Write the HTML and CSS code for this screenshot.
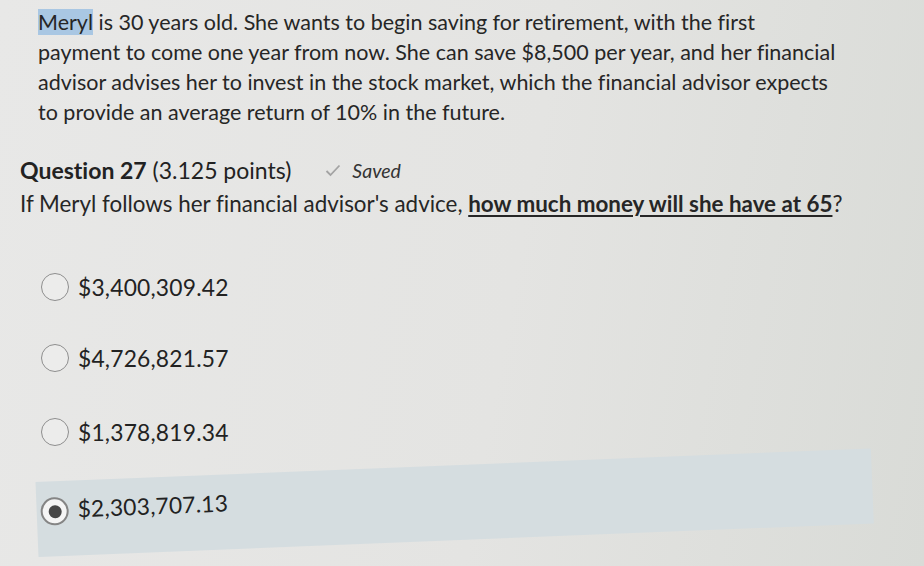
FILE: index.html
```html
<!DOCTYPE html>
<html>
<head>
<meta charset="utf-8">
<link rel="stylesheet" href="styles.css">
</head>
<body>
<div class="page">
  <p class="stem"><span class="sel">Meryl</span> is 30 years old. She wants to begin saving for retirement, with the first<br>payment to come one year from now. She can save $8,500 per year, and her financial<br>advisor advises her to invest in the stock market, which the financial advisor expects<br>to provide an average return of 10% in the future.</p>
  <div class="qhead">
    <span class="qtitle"><b>Question 27</b> (3.125 points)</span>
    <span class="saved">
      <svg class="check" width="16" height="13" viewBox="0 0 16 13"><path d="M1.5 7 L5.5 11 L14.5 1.5" fill="none" stroke="#a3a3a3" stroke-width="1.8"/></svg>
      <i>Saved</i>
    </span>
  </div>
  <p class="prompt">If Meryl follows her financial advisor's advice, <b class="u">how much money will she have at 65</b>?</p>
  <div class="options">
    <div class="opt o1"><span class="radio"></span><span class="val">$3,400,309.42</span></div>
    <div class="opt o2"><span class="radio"></span><span class="val">$4,726,821.57</span></div>
    <div class="opt o3"><span class="radio"></span><span class="val">$1,378,819.34</span></div>
    <div class="opt chosen"><span class="radio on"></span><span class="val">$2,303,707.13</span></div>
  </div>
</div>
</body>
</html>
```
FILE: styles.css
```css
html, body {
  margin: 0;
  padding: 0;
}
body {
  width: 924px;
  height: 566px;
  overflow: hidden;
  background: linear-gradient(100deg, #e8e8e7 0%, #e4e4e2 55%, #d9dbd7 100%);
  font-family: Lato, "Open Sans", sans-serif;
  font-variant-ligatures: none;
  color: #222;
}
.page {
  padding-top: 7px;
}
.stem {
  margin: 0 0 0 38px;
  font-size: 21.5px;
  line-height: 30px;
  color: #262626;
}
.sel {
  background: #a9c7e3;
}
.qhead {
  display: flex;
  align-items: center;
  margin: 29px 0 0 20px;
  height: 28px;
}
.qtitle {
  font-size: 23px;
  color: #222;
}
.qtitle b {
  font-weight: 700;
}
.saved {
  display: flex;
  align-items: center;
  margin-left: 34px;
  color: #333;
  font-size: 19.5px;
  gap: 11px;
}
.prompt {
  margin: 6px 0 0 20px;
  font-size: 22.4px;
  line-height: 27px;
  color: #262626;
}
.u {
  text-decoration: underline;
  text-decoration-thickness: 2px;
  text-underline-offset: 3px;
}
.options {
  margin-top: 58px;
  display: flex;
  flex-direction: column;
}
.opt {
  display: flex;
  align-items: center;
  gap: 9px;
  height: 24px;
  padding-left: 41px;
}
.o2 { margin-top: 47px; }
.o3 { margin-top: 50px; }
.opt.chosen {
  margin: 38px 0 0 37px;
  padding: 16px 0 31px 4px;
  width: 832px;
  height: 28px;
  align-items: center;
  background: #d5dde0;
  transform: rotate(-2.3deg);
  transform-origin: 0 50%;
}
.radio {
  width: 28px;
  height: 28px;
  border: 1.5px solid #8e8e8e;
  border-radius: 50%;
  box-sizing: border-box;
  background: #ececeb;
  display: flex;
  align-items: center;
  justify-content: center;
  flex: none;
}
.radio.on {
  background: #f5f5f5;
  border: 2px solid #858585;
}
.radio.on::after {
  content: "";
  width: 13px;
  height: 13px;
  border-radius: 50%;
  background: #474747;
}
.val {
  font-size: 22.8px;
  color: #222;
  letter-spacing: 0.2px;
}
.chosen .val {
  margin-bottom: 5px;
}
```
